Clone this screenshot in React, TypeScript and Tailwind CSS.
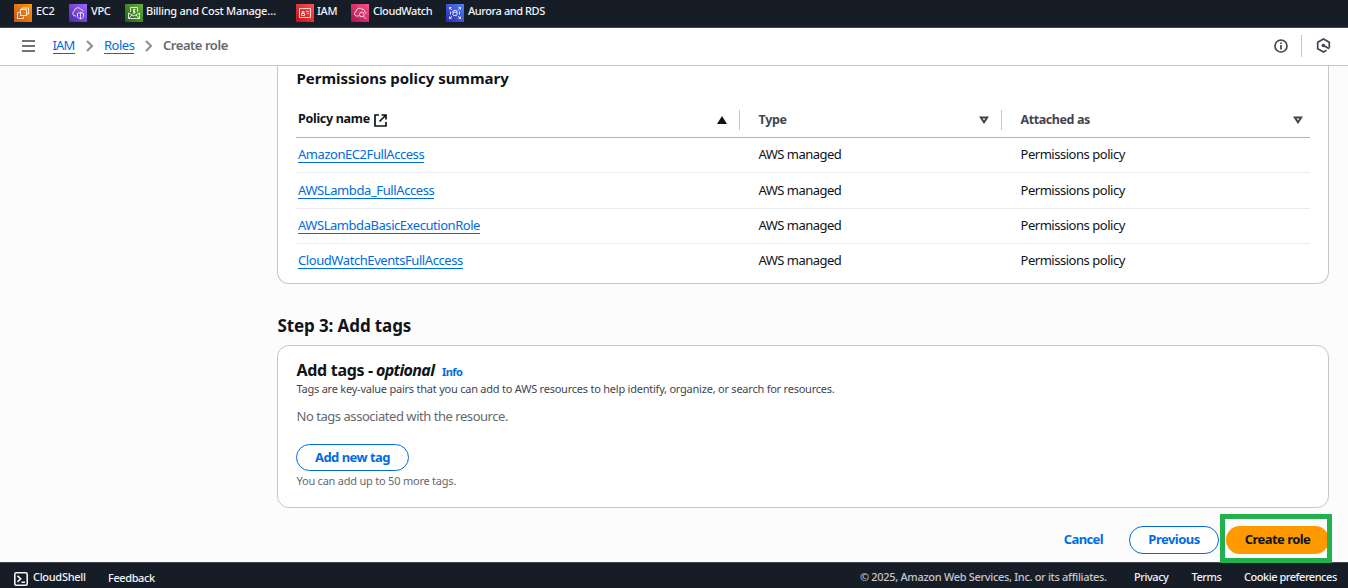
import React from 'react';

type Shortcut = { label: string; box: string; bg: string; text: string; icon: React.ReactNode };

const shortcuts: Shortcut[] = [
  {
    label: 'EC2', box: 'w-[55px]', bg: 'from-[#c8511b] to-[#ff9900]', text: 'tracking-[-0.3px]',
    icon: (
      <>
        <path d="M6.500 5.500h6v6h-6zM5.500 8.500h-2v6h6v-2" />
        <path d="M8 5.500V4h6.500v6h-2" />
      </>
    ),
  },
  {
    label: 'VPC', box: 'w-[56px]', bg: 'from-[#4d27aa] to-[#a166ff]', text: 'tracking-[-0.3px]',
    icon: (
      <>
        <path d="M7 12H6a2.600 2.600 0 0 1-.5-5A3.400 3.400 0 0 1 12 5.700c1.300 0 2 .8 2.200 1.800" />
        <path d="M8.500 9.500 11.500 8.300l3 1.200v2.800c0 1.300-1.500 2-3 2.700-1.500-.7-3-1.400-3-2.700zM11.500 8.300V15" />
      </>
    ),
  },
  {
    label: 'Billing and Cost Manage…', box: 'w-[171px]', bg: 'from-[#1b660f] to-[#6cae3e]', text: '-ml-px tracking-[-0.27px]',
    icon: (
      <>
        <path d="M5.500 8V3.500h7V8M3.500 9v5.500h11V9M3.500 9l5.500 3 5.500-3M3.500 14.500 7 11M14.500 14.500 11 11" />
        <path d="M10.300 5.500H8.500v1.700h1.300v1.700H8M9 4.700v5" />
      </>
    ),
  },
  {
    label: 'IAM', box: 'w-[55px]', bg: 'from-[#bd0816] to-[#ff5252]', text: '-ml-px tracking-[-0.3px]',
    icon: (
      <>
        <path d="M3.500 4.500h11v9h-11zM5.500 11.500v-2h3v2zM6.300 9.300V7.500h1.500v1.800M10 7.500h3M11 9.500h2" />
      </>
    ),
  },
  {
    label: 'CloudWatch', box: 'w-[95px]', bg: 'from-[#b0084d] to-[#ff4f8b]', text: 'tracking-[-0.42px]',
    icon: (
      <>
        <path d="M8 12H5.500a2.300 2.300 0 0 1-.3-4.500A3.300 3.300 0 0 1 11 5.300c1.500-.5 2.500.4 2.500 2.200 1 .4 1.500 1 1.500 2" />
        <circle cx="10.800" cy="10.500" r="2.300" />
        <path d="m12.500 12.300 2.500 2.500" />
      </>
    ),
  },
  {
    label: 'Aurora and RDS', box: 'w-[110px]', bg: 'from-[#2e27ad] to-[#527fff]', text: 'tracking-[-0.42px]',
    icon: (
      <>
        <path d="M3.500 5.500v-2h2M3.500 3.500 6 6M12.500 3.500h2v2M14.500 3.500 12 6M3.500 12.500v2h2M3.500 14.500 6 12M12.500 14.500h2v-2M14.500 14.500 12 12" />
        <path d="M7 7c0-.8 4-.8 4 0v4c0 .8-4 .8-4 0zM4.500 7.500v3M13.500 7.500v3M7 8.200h4" />
      </>
    ),
  },
];

const policies = [
  { name: 'AmazonEC2FullAccess', row: 'h-[35px] border-b', track: 'tracking-[-0.45px]' },
  { name: 'AWSLambda_FullAccess', row: 'h-[36px] border-b', track: 'tracking-[-0.4px]' },
  { name: 'AWSLambdaBasicExecutionRole', row: 'h-[35px] border-b', track: 'tracking-[-0.45px]' },
  { name: 'CloudWatchEventsFullAccess', row: 'h-[33px]', track: 'tracking-[-0.42px]' },
];

function Chevron() {
  return (
    <svg className="h-3 w-2 shrink-0" viewBox="0 0 8 12" fill="none" stroke="#8c8c94" strokeWidth="2">
      <path d="m1 1 5 5-5 5" />
    </svg>
  );
}

function SortIcon() {
  return (
    <svg className="h-2 w-[10px] shrink-0" viewBox="0 0 10 8" fill="none" stroke="#424650" strokeWidth="2">
      <path d="M1.800 1.500h6.400L5 6.300z" />
    </svg>
  );
}

function TopBar() {
  return (
    <header className="flex h-7 shrink-0 border-b border-[#424650] bg-[#161d26] pl-[14px]">
      {shortcuts.map((s) => (
        <div key={s.label} className={`flex shrink-0 ${s.box}`}>
          <span className={`mt-1 flex h-[18px] w-[18px] shrink-0 bg-linear-to-tr ${s.bg}`}>
            <svg className="h-[18px] w-[18px]" viewBox="0 0 18 18" fill="none" stroke="white" strokeWidth=".8">
              {s.icon}
            </svg>
          </span>
          <span className="pl-1">
            <span className={`block whitespace-nowrap text-[11px] leading-[22px] font-medium text-[#f3f3f7] ${s.text}`}>{s.label}</span>
          </span>
        </div>
      ))}
    </header>
  );
}

function Breadcrumbs() {
  return (
    <nav className="flex h-[38px] shrink-0 items-center border-b border-[#c6c6cd] bg-white pb-[2px] pl-[22px] text-[13px]">
      <svg className="h-3 w-[13px] shrink-0" viewBox="0 0 13 12" stroke="#424650" strokeWidth="1.700">
        <path d="M0 1h13M0 6h13M0 11h13" />
      </svg>
      <div className="ml-[17.500px] w-[33.500px]">
        <a className="inline-block border-b border-[#006ce0] leading-[15px] tracking-[-0.8px] text-[#006ce0]">IAM</a>
      </div>
      <Chevron />
      <div className="ml-[9px] w-[42px] pl-px">
        <a className="inline-block border-b border-[#006ce0] leading-[15px] tracking-[-0.5px] text-[#006ce0]">Roles</a>
      </div>
      <Chevron />
      <span className="ml-[10px] font-semibold tracking-[-0.46px] text-[#656871]">Create role</span>
      <div className="ml-auto flex items-center pr-[17px]">
        <svg className="h-[14px] w-[14px]" viewBox="0 0 14 14" fill="none" stroke="#424650" strokeWidth="1.700">
          <circle cx="7" cy="7" r="6" />
          <path d="M7 6v4.500M7 3.500v1.600" />
        </svg>
        <span className="ml-[13px] h-[22px] w-px bg-[#c6c6cd]" />
        <svg className="ml-[14px] h-[15px] w-[15px]" viewBox="0 0 15 15" fill="none" stroke="#424650" strokeWidth="1.700">
          <path d="M10.500 12.200 7.500 14 1.700 10.800V4.200L7.500 1l5.800 3.200v5.500" />
          <circle cx="7.300" cy="7.500" r="1.800" fill="#424650" stroke="none" />
          <path d="m7.500 7.600 5.800 3.200" />
        </svg>
      </div>
    </nav>
  );
}

function PolicySummary() {
  return (
    <section className="h-[218px] rounded-b-xl border border-t-0 border-[#c6c6cd] bg-white px-[18px]">
      <h2 className="h-[37px] pl-[0.5px] text-[15px] leading-[25px] font-bold tracking-[-0.03px]">Permissions policy summary</h2>
      <div className="flex h-[35px] items-center border-b border-[#b4b4bb] pl-[2px] text-[13px] font-bold">
        <div className="flex w-[442px] items-center border-r border-[#c6c6cd] pr-3">
          <span className="-mt-px mb-px text-[12.500px] leading-5 tracking-[-0.3px]">Policy name</span>
          <svg className="ml-1 h-[13px] w-[13px]" viewBox="0 0 13 13" fill="none" stroke="#0f141a" strokeWidth="1.700">
            <path d="M5 1H1v11h11V8M7.500 1H12v4.500M12 1 5.500 7.500" />
          </svg>
          <svg className="ml-auto h-2 w-[10px]" viewBox="0 0 10 8" fill="#0f141a"><path d="M5 0 10 8H0z" /></svg>
        </div>
        <div className="flex w-[262px] items-center border-r border-[#c6c6cd] pr-3 pl-[18.500px] text-[#424650]">
          <span className="text-[12.500px] leading-5 tracking-[-0.3px]">Type</span>
          <span className="ml-auto"><SortIcon /></span>
        </div>
        <div className="flex flex-1 items-center pr-[7px] pl-[18.500px] text-[#424650]">
          <span className="text-[12.500px] leading-5 tracking-[-0.42px]">Attached as</span>
          <span className="ml-auto"><SortIcon /></span>
        </div>
      </div>
      {policies.map((p) => (
        <div key={p.name} className={`flex items-center border-[#ebebf0] pl-[2px] text-[13px] ${p.row}`}>
          <div className="w-[460.500px]">
            <a className={`inline-block border-b border-[#006ce0] leading-[15px] text-[#006ce0] ${p.track}`}>{p.name}</a>
          </div>
          <div className="w-[262px] tracking-[-0.53px]">AWS managed</div>
          <div className="tracking-[-0.47px]">Permissions policy</div>
        </div>
      ))}
    </section>
  );
}

function TagsPanel() {
  return (
    <section className="h-[163px] rounded-xl border border-[#c6c6cd] bg-white pt-[14px] pr-[18px] pl-[18.500px]">
      <h2 className="flex h-[21px] items-baseline text-[16px] leading-[21px] font-bold">
        <span className="w-[79.500px] whitespace-nowrap tracking-[-0.3px]">Add tags -</span>
        <em className="w-[66px] tracking-[-0.65px]">optional</em>
        <a className="text-[11px] tracking-[-0.6px] text-[#006ce0]">Info</a>
      </h2>
      <p className="h-[17px] text-[11px] leading-[16px] tracking-[-0.23px] text-[#424650]">
        Tags are key-value pairs that you can add to AWS resources to help identify, organize, or search for resources.
      </p>
      <p className="mt-2 h-5 text-[13px] leading-5 tracking-[-0.46px] text-[#656871]">No tags associated with the resource.</p>
      <button className="mt-[18px] -ml-[0.5px] flex h-[27px] w-[113px] items-center justify-center rounded-full border border-[#006ce0] text-[13px] font-bold tracking-[-0.53px] text-[#006ce0]">
        Add new tag
      </button>
      <p className="mt-px text-[11px] leading-[17px] tracking-[-0.22px] text-[#656871]">You can add up to 50 more tags.</p>
    </section>
  );
}

export default function App() {
  return (
    <div className="flex h-[588px] w-[1348px] flex-col overflow-hidden bg-[#fcfcfd] text-[#0f141a] [font-family:'Noto_Sans',sans-serif]">
      <TopBar />
      <Breadcrumbs />
      <main className="h-[496px] shrink-0 pr-[19px] pl-[277px]">
        <PolicySummary />
        <h1 className="h-[61px] pt-[31px] pl-[0.5px] text-[17px] leading-[22px] font-bold tracking-[-0.11px]">Step 3: Add tags</h1>
        <TagsPanel />
        <div className="mt-[6px] -mr-[3px] flex h-[49px] justify-end text-[13px] font-bold">
          <button className="mr-[26px] h-[52px] tracking-[-0.63px] text-[#006ce0]">Cancel</button>
          <button className="mt-3 mr-px h-7 w-[90px] rounded-full border border-[#006ce0] bg-white tracking-[-0.53px] text-[#006ce0]">Previous</button>
          <div className="relative z-10 h-[49px] w-28 overflow-hidden border-[5px] border-[#22b14c] pt-[7px] pl-px">
            <button className="h-7 w-[103px] rounded-full bg-[#ff9900] tracking-[-0.53px]">Create role</button>
          </div>
        </div>
      </main>
      <footer className="flex h-[26px] shrink-0 border-t border-[#424650] bg-[#161d26] text-[11px] font-medium whitespace-nowrap text-[#f3f3f7]">
        <svg className="mt-[9px] ml-[14px] h-[14px] w-[14px]" viewBox="0 0 14 14" fill="none" stroke="#f3f3f7" strokeWidth="1.600">
          <rect x=".8" y=".8" width="12.400" height="12.400" rx="1.500" />
          <path d="m3.500 3.800 3.200 3-3.200 3M7.500 10.200h3.500" />
        </svg>
        <span className="ml-[5px] w-[75px] leading-[28px] tracking-[-0.3px]">CloudShell</span>
        <span className="leading-[30px] tracking-[-0.4px]">Feedback</span>
        <div className="ml-auto flex pr-[11px] leading-[28px]">
          <span className="w-[274px] tracking-[-0.32px] text-[#c6c6cd]">© 2025, Amazon Web Services, Inc. or its affiliates.</span>
          <span className="w-[57.500px] tracking-[-0.45px]">Privacy</span>
          <span className="w-[52.500px] tracking-[-0.45px]">Terms</span>
          <span className="w-[93px] tracking-[-0.47px]">Cookie preferences</span>
        </div>
      </footer>
    </div>
  );
}
